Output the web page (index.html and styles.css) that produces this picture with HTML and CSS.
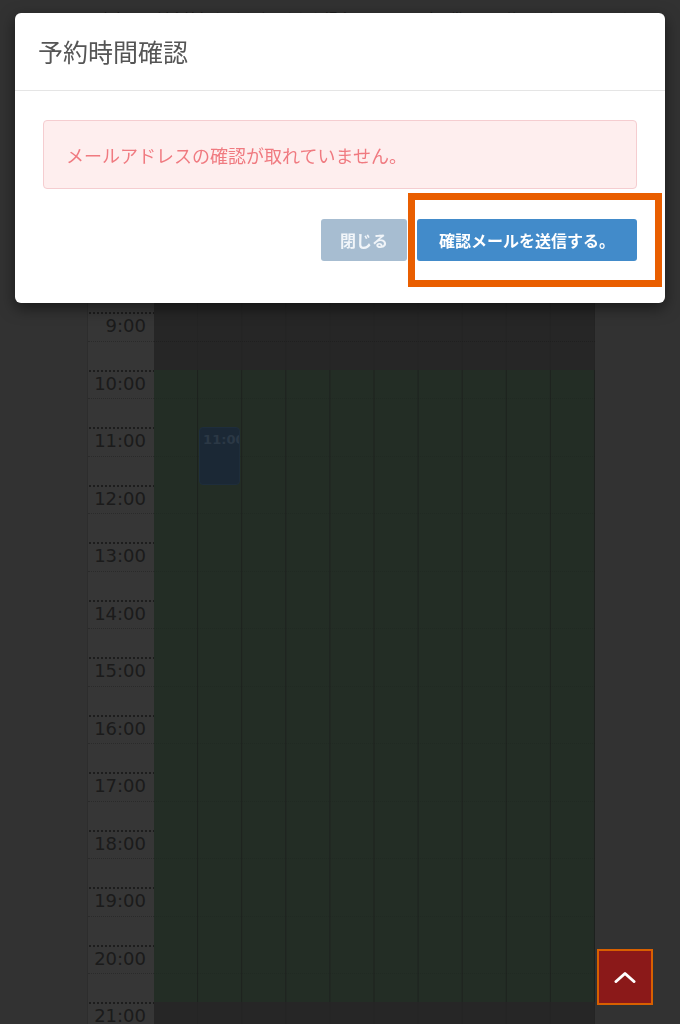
FILE: index.html
```html
<!DOCTYPE html>
<html lang="ja">
<head>
    <meta charset="utf-8">
    <meta name="viewport" content="width=device-width, initial-scale=1.0">
    <title>予約時間確認</title>
    <link rel="stylesheet" href="styles.css">
</head>
<body class="modal-open">
    <div class="page">
        <p class="notice">※各部屋の料金情報などを確認された場合は、以下の時間帯から予約を選択してください。</p>

        <div class="schedule">
            <div class="schedule-head"></div>

            <div class="hour closed"><div class="time">7:00</div><div class="slots"></div></div>
            <div class="hour closed"><div class="time">8:00</div><div class="slots"></div></div>
            <div class="hour closed"><div class="time">9:00</div><div class="slots"></div></div>
            <div class="hour"><div class="time">10:00</div><div class="slots"></div></div>
            <div class="hour">
                <div class="time">11:00</div>
                <div class="slots">
                    <div class="event">11:00</div>
                </div>
            </div>
            <div class="hour"><div class="time">12:00</div><div class="slots"></div></div>
            <div class="hour"><div class="time">13:00</div><div class="slots"></div></div>
            <div class="hour"><div class="time">14:00</div><div class="slots"></div></div>
            <div class="hour"><div class="time">15:00</div><div class="slots"></div></div>
            <div class="hour"><div class="time">16:00</div><div class="slots"></div></div>
            <div class="hour"><div class="time">17:00</div><div class="slots"></div></div>
            <div class="hour"><div class="time">18:00</div><div class="slots"></div></div>
            <div class="hour"><div class="time">19:00</div><div class="slots"></div></div>
            <div class="hour"><div class="time">20:00</div><div class="slots"></div></div>
            <div class="hour closed"><div class="time">21:00</div><div class="slots"></div></div>
        </div>
    </div>

    <div class="backdrop"></div>

    <div class="modal">
        <div class="modal-header">
            <h4 class="modal-title">予約時間確認</h4>
        </div>
        <div class="modal-body">
            <div class="alert">メールアドレスの確認が取れていません。</div>
            <div class="modal-actions">
                <button class="btn btn-close">閉じる</button>
                <button class="btn btn-primary">確認メールを送信する。</button>
            </div>
        </div>
        <div class="highlight"></div>
    </div>

    <button class="to-top" aria-label="ページトップへ">
        <svg width="22" height="12" viewBox="0 0 22 12">
            <polyline points="2,10.5 11,2.5 20,10.5" fill="none" stroke="#fff" stroke-width="3" stroke-linecap="round" stroke-linejoin="round"/>
        </svg>
    </button>
</body>
</html>
```

FILE: styles.css
```css
* {
    box-sizing: border-box;
}

body {
    margin: 0;
    background-color: #646464;
    font-family: "DejaVu Sans", "Noto Sans CJK JP", sans-serif;
    color: #363636;
}

.modal-open {
    overflow: hidden;
}

/* page behind the dialog */

.notice {
    margin: 0;
    padding: 8px 0 0 86px;
    height: 26px;
    font-family: "Noto Sans CJK JP", sans-serif;
    font-size: 14px;
    line-height: 20px;
    white-space: nowrap;
    color: #333;
}

.schedule {
    width: 508px;
    margin: 115px 0 0 87px;
}

.schedule-head {
    height: 56px;
}

.hour {
    display: flex;
    height: 57.5px;
}

.time {
    position: relative;
    width: 67px;
    padding-right: 8px;
    border-left: 1px solid #5a5a5a;
    background-color: #6c6c6c;
    background-image: radial-gradient(circle, #3a3a3a 0.9px, transparent 1.1px);
    background-size: 4px 2px;
    background-repeat: repeat-x;
    text-align: right;
    font-size: 18px;
    line-height: 28px;
}

.time::after,
.slots::after {
    content: "";
    position: absolute;
    top: 28.75px;
    left: 0;
    right: 0;
    border-top: 1px dotted rgba(40, 40, 40, 0.35);
}

.slots::after {
    border-top-color: rgba(40, 40, 40, 0.15);
}

.closed .slots::after {
    border-top-color: rgba(40, 40, 40, 0.35);
}

.slots {
    position: relative;
    flex: 1;
    background-color: #465a4a;
    background-image: linear-gradient(to right, transparent calc(100% - 1px), #3a423c 0);
    background-size: 10% 100%;
}

.closed .slots {
    background-color: #4c4c4c;
    background-image: linear-gradient(to right, transparent calc(100% - 1px), #484848 0);
}

.event {
    position: absolute;
    top: 0;
    left: calc(10% + 1px);
    width: calc(10% - 3px);
    height: 57.5px;
    padding: 4px 3px;
    overflow: hidden;
    white-space: nowrap;
    background: #36506a;
    border: 1px solid #3c5a76;
    border-radius: 4px;
    color: #56708a;
    font-size: 13px;
    font-weight: bold;
    z-index: 1;
}

/* dialog */

.backdrop {
    position: fixed;
    inset: 0;
    background: rgba(0, 0, 0, 0.5);
    z-index: 10;
}

.modal {
    position: fixed;
    top: 13px;
    left: 15px;
    right: 15px;
    background: #fff;
    border-radius: 6px;
    box-shadow: 0 5px 15px rgba(0, 0, 0, 0.5);
    font-family: "Noto Sans CJK JP", sans-serif;
    z-index: 20;
}

.modal-header {
    padding: 20px 23px 21px;
    border-bottom: 1px solid #e5e5e5;
}

.modal-title {
    margin: 0;
    font-size: 25px;
    font-weight: normal;
    line-height: 36px;
    color: #555;
}

.modal-body {
    padding: 29px 28px 42px;
}

.alert {
    height: 69px;
    padding: 0 22px;
    display: flex;
    align-items: center;
    background: #feeeee;
    border: 1px solid #f5cdd0;
    border-radius: 4px;
    color: #f07a80;
    font-size: 18px;
}

.modal-actions {
    display: flex;
    justify-content: flex-end;
    gap: 10px;
    margin-top: 30px;
}

.btn {
    height: 42px;
    padding: 0 19px;
    border: none;
    border-radius: 3px;
    font-family: inherit;
    font-size: 16px;
    font-weight: bold;
    color: #fff;
    cursor: pointer;
}

.btn-close {
    background: #a7bdd1;
    color: #f1f5f9;
}

.btn-primary {
    padding: 0 22px;
    background: #428bca;
}

.highlight {
    position: absolute;
    top: 180px;
    left: 393px;
    width: 254px;
    height: 94px;
    border: 7px solid #e95e00;
    pointer-events: none;
}

.to-top {
    position: fixed;
    right: 27px;
    bottom: 19px;
    width: 56px;
    height: 56px;
    display: flex;
    align-items: center;
    justify-content: center;
    padding: 0;
    background: #8b1919;
    border: 2px solid #d86000;
    cursor: pointer;
    z-index: 30;
}
```
